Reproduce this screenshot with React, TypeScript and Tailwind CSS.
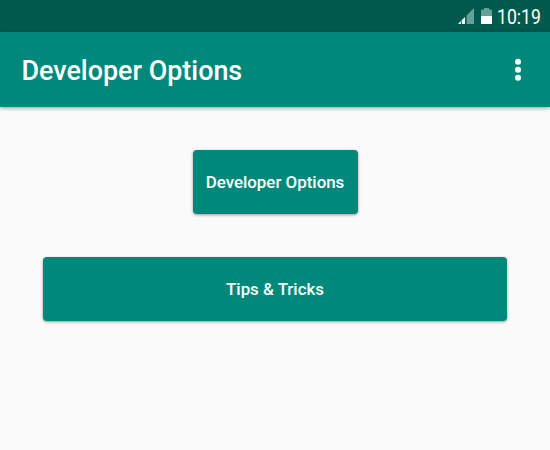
export default function App() {
  return (
    <div className="flex h-[450px] w-[550px] flex-col overflow-hidden bg-[#fafafa] font-['Roboto',sans-serif] text-white">
      <div className="flex h-8 shrink-0 items-center justify-end bg-[#00594d] pr-[9px]">
        <svg className="mr-[5px] h-8 w-[34px]" viewBox="458 0 34 32">
          <path d="M466.6 24V15.6L474 8V24Z" fill="#66a098" />
          <path d="M458 24L461 21V24Z" fill="#fff" />
          <path d="M461.8 24V20.2L465 17V24Z" fill="#fff" />
          <path d="M481 16V11Q481 9.5 482 9.5H484V8H489V9.5H491Q492 9.5 492 11V16Z" fill="#66a098" />
          <path d="M481 16H492V24H481Z" fill="#fff" />
        </svg>
        <span className="w-[44px] pt-[2px] text-[20px] leading-[30px]"><span className="block w-[50px] origin-left scale-x-[0.88]">10:19</span></span>
      </div>
      <header className="z-10 flex h-[75px] shrink-0 items-center justify-between bg-[#00897b] pl-[21.5px] pr-[28px] shadow-[0_1px_4px_rgba(0,0,0,0.4)]">
        <h1 className="pt-[3px] text-[26.9px] font-medium">Developer Options</h1>
        <svg className="h-6 w-2" viewBox="0 0 8 24" fill="#fff">
          <circle cx="4" cy="3.8" r="3" /><circle cx="4" cy="11.8" r="3" /><circle cx="4" cy="19.8" r="3" />
        </svg>
      </header>
      <main className="flex flex-col items-center gap-[43px] pt-[43px]">
        <button className="h-16 w-[165px] rounded bg-[#00897b] pt-[2px] text-[16.9px] font-medium shadow-[0_1px_3px_rgba(0,0,0,0.4)]">Developer Options</button>
        <button className="h-16 w-[464px] rounded bg-[#00897b] pt-[2px] text-[16.9px] font-medium shadow-[0_1px_3px_rgba(0,0,0,0.4)]">Tips &amp; Tricks</button>
      </main>
    </div>
  );
}
